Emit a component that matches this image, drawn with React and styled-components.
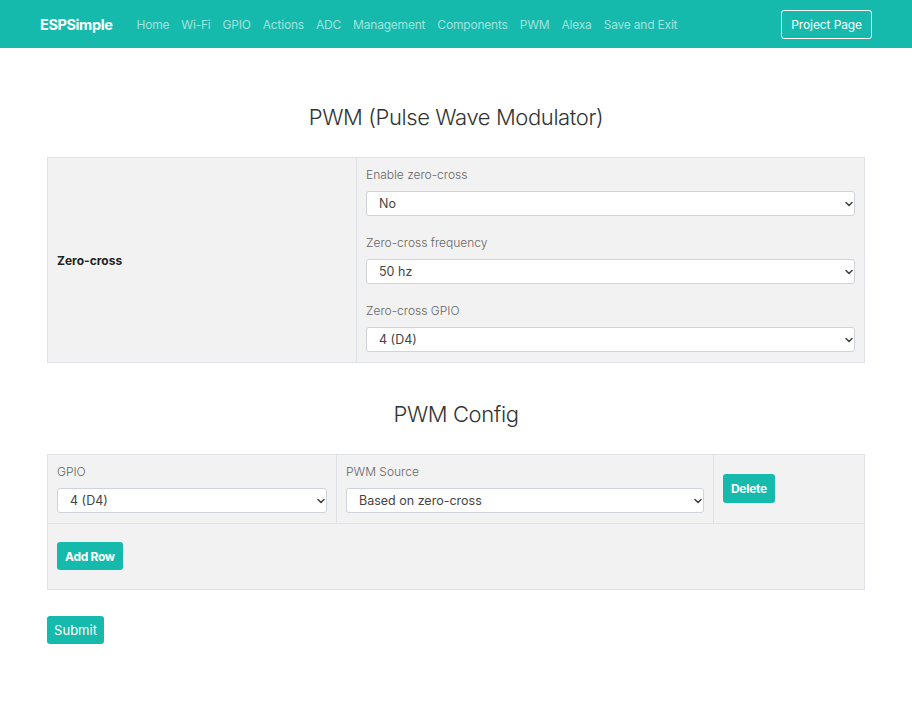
import React from "react";
import styled, { createGlobalStyle } from "styled-components";
import { ChevronDown } from "lucide-react";

const teal = "#15baad";

const GlobalStyle = createGlobalStyle`
  body {
    margin: 0;
    background: #ffffff;
    font-family: Inter, "Noto Sans", "Liberation Sans", sans-serif;
    color: #333333;
  }
`;

const Nav = styled.nav`
  height: 48px;
  background: ${teal};
  display: flex;
  align-items: center;
  padding: 0 40px;
`;

const Brand = styled.div`
  color: #ffffff;
  font-size: 14.5px;
  font-weight: 700;
  letter-spacing: -0.4px;
  margin-right: 18px;
`;

const NavLinks = styled.ul`
  display: flex;
  list-style: none;
  margin: 0;
  padding: 0;
  flex: 1;
`;

const NavLink = styled.li`
  color: rgba(255, 255, 255, 0.6);
  font-size: 12px;
  letter-spacing: -0.2px;
  padding: 0 6px;
`;

const OutlineButton = styled.button`
  background: transparent;
  border: 1px solid #ffffff;
  border-radius: 3px;
  color: #ffffff;
  font-family: inherit;
  font-size: 12px;
  letter-spacing: -0.1px;
  height: 29px;
  padding: 0 9px;
`;

const Main = styled.main`
  margin: 0 47px;
  padding-bottom: 40px;
`;

const Heading = styled.h2`
  margin: ${(p) => p.$top}px 0 ${(p) => p.$bottom}px;
  text-align: center;
  font-size: 22px;
  font-weight: 300;
  letter-spacing: -0.4px;
  line-height: 29px;
  color: #333333;
`;

const Table = styled.div`
  display: grid;
  grid-template-columns: ${(p) => p.$cols};
  border: 1px solid #dee2e6;
  background: #f2f2f2;
`;

const Cell = styled.div`
  padding: ${(p) => p.$pad || "8px 9px 10px"};
  border-left: ${(p) => (p.$first ? "none" : "1px solid #dee2e6")};
  border-top: ${(p) => (p.$topLine ? "1px solid #dee2e6" : "none")};
  grid-column: ${(p) => p.$span || "auto"};
  display: flex;
  flex-direction: column;
  justify-content: ${(p) => (p.$center ? "center" : "flex-start")};
  align-items: ${(p) => (p.$center ? "flex-start" : "stretch")};
`;

const RowLabel = styled.div`
  font-size: 12px;
  font-weight: 700;
  color: #222222;
`;

const Group = styled.div`
  & + & {
    margin-top: 18px;
  }
`;

const Label = styled.div`
  font-size: 12px;
  line-height: 18px;
  color: #666666;
  margin-bottom: 7px;
  font-weight: 300;
`;

const SelectWrap = styled.div`
  position: relative;
`;

const Select = styled.select`
  appearance: none;
  width: 100%;
  height: 25px;
  border: 1px solid #ced4da;
  border-radius: 3px;
  background: #ffffff;
  font-family: inherit;
  font-size: 12.5px;
  color: #444444;
  padding: 0 28px 0 12px;
  display: block;
`;

const Chevron = styled(ChevronDown)`
  position: absolute;
  right: 0;
  top: 6.5px;
  pointer-events: none;
`;

const Button = styled.button`
  background: ${teal};
  border: none;
  border-radius: 3px;
  color: #ffffff;
  font-family: inherit;
  font-size: 12px;
  letter-spacing: ${(p) => (p.$bold ? "-0.3px" : "0")};
  font-weight: ${(p) => (p.$bold ? 700 : 400)};
  height: ${(p) => p.$h || 28}px;
  padding: 0 ${(p) => p.$px || 9}px;
`;

const SubmitButton = styled(Button)`
  font-size: 13px;
  margin-top: 26px;
  width: 57px;
  padding: 0;
`;

const Field = ({ label, value }) => (
  <Group>
    <Label>{label}</Label>
    <SelectWrap>
      <Select defaultValue={value}>
        <option>{value}</option>
      </Select>
      <Chevron size={12} strokeWidth={3.2} color="#444" />
    </SelectWrap>
  </Group>
);

const links = [
  "Home",
  "Wi-Fi",
  "GPIO",
  "Actions",
  "ADC",
  "Management",
  "Components",
  "PWM",
  "Alexa",
  "Save and Exit",
];

export default function App() {
  return (
    <>
      <GlobalStyle />
      <Nav>
        <Brand>ESPSimple</Brand>
        <NavLinks>
          {links.map((l) => (
            <NavLink key={l}>{l}</NavLink>
          ))}
        </NavLinks>
        <OutlineButton>Project Page</OutlineButton>
      </Nav>
      <Main>
        <Heading $top={55} $bottom={25}>
          PWM (Pulse Wave Modulator)
        </Heading>
        <Table $cols="308px 1fr">
          <Cell $first $center $pad="0 9px">
            <RowLabel>Zero-cross</RowLabel>
          </Cell>
          <Cell>
            <Field label="Enable zero-cross" value="No" />
            <Field label="Zero-cross frequency" value="50 hz" />
            <Field label="Zero-cross GPIO" value="4 (D4)" />
          </Cell>
        </Table>

        <Heading $top={37} $bottom={25}>
          PWM Config
        </Heading>
        <Table $cols="288px 377px 1fr">
          <Cell $first>
            <Field label="GPIO" value="4 (D4)" />
          </Cell>
          <Cell>
            <Field label="PWM Source" value="Based on zero-cross" />
          </Cell>
          <Cell $pad="19px 9px 9px">
            <div>
              <Button $bold $h={29} $px={8}>
                Delete
              </Button>
            </div>
          </Cell>
          <Cell $first $topLine $span="1 / -1" $pad="18px 9px 19px">
            <div>
              <Button $bold $px={8}>
                Add Row
              </Button>
            </div>
          </Cell>
        </Table>

        <SubmitButton>Submit</SubmitButton>
      </Main>
    </>
  );
}
